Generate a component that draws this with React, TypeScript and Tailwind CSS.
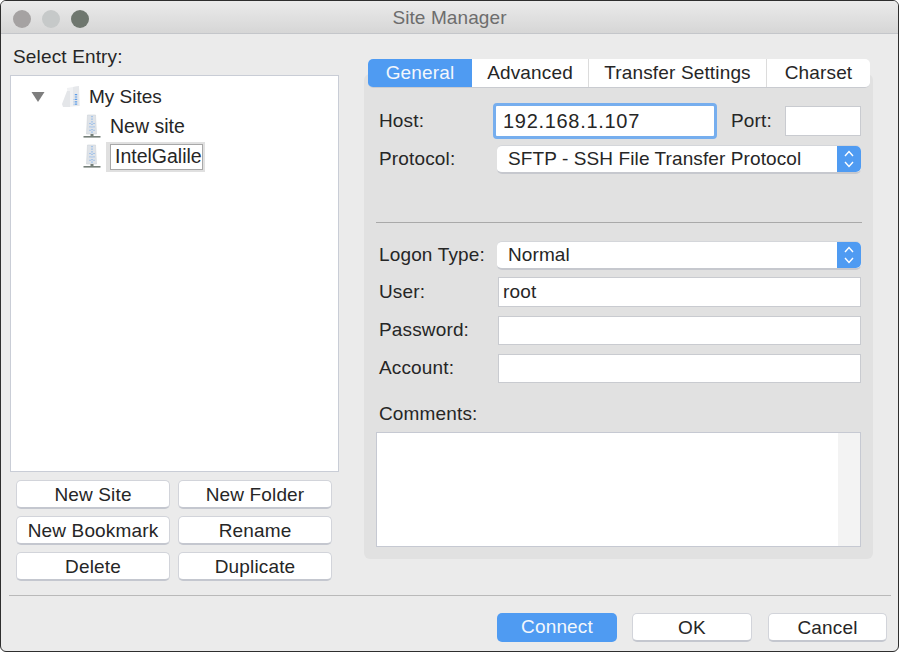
import React from "react";

const TXT = "text-[19px] tracking-[0.15px] text-[#262626]";
const BTN =
  "flex items-center justify-center pt-[1px] bg-white rounded-[5px] border border-[#d2d4da] border-b-[2px] border-b-[#c4c7cf] text-[19px] tracking-[0.15px] text-[#262626] leading-none";

// little server tower used in the tree
function ServerIcon() {
  return (
    <svg width="18" height="26" viewBox="0 0 18 26" className="shrink-0">
      <path d="M4.5 1 L12.5 1 L13.5 20 L3.5 20 Z" fill="#dfe3e8" stroke="#cfd3d8" strokeWidth="0.6" />
      <path d="M9 2 L9 20" stroke="#8fb8ea" strokeWidth="1.4" strokeDasharray="1.2 1.4" />
      <path d="M7 9 L7 19 M11 9 L11 19" stroke="#6fa6ea" strokeWidth="1" strokeDasharray="1 2.4" />
      <rect x="7.5" y="20" width="3" height="2" fill="#76807a" />
      <rect x="0.5" y="22" width="17" height="1.6" fill="#76807a" />
    </svg>
  );
}

// the My Sites folder stack
function SitesIcon() {
  return (
    <svg width="20" height="24" viewBox="0 0 20 24" className="shrink-0">
      <path d="M6 3 L18 1 L18.5 21 L8 22 Z" fill="#f0f1f3" />
      <path d="M1 19 L6 6 L9 6 L9 22 L2 22 Z" fill="#e4e6e9" />
      <path d="M12 2 L18 1 L18.5 21 L12 21 Z" fill="#e6e8eb" />
      <path d="M15 9 L15 20" stroke="#5c9ce8" strokeWidth="2.4" strokeDasharray="1.2 1.2" />
      <path d="M13 14 L13 20" stroke="#9cc2ef" strokeWidth="1" strokeDasharray="1 1.4" />
    </svg>
  );
}

function Stepper() {
  return (
    <div className="w-[24px] self-stretch shrink-0 flex items-center justify-center bg-[#4f9bf2] rounded-r-[5px]">
      <svg width="12" height="20" viewBox="0 0 12 20" fill="none" stroke="#ffffff" strokeWidth="1.4">
        <path d="M2 7 L6 2.5 L10 7" />
        <path d="M2 13 L6 17.5 L10 13" />
      </svg>
    </div>
  );
}

function Select({ value }: { value: string }) {
  return (
    <div className="flex items-center w-[364px] bg-white rounded-[5px] border-b-[2px] border-b-[#c6c8ce] border-t border-t-[#d4d6da] h-[29px]">
      <span className="flex-1 pl-[11px] text-[19px] tracking-[0.1px] text-[#262626]">{value}</span>
      <Stepper />
    </div>
  );
}

function Field({ label, top }: { label: string; top: string }) {
  return (
    <div className={`flex items-center ${top}`}>
      <span className={`w-[119px] shrink-0 ${TXT}`}>{label}</span>
      <div className="w-[363px] h-[29px] bg-white border border-[#c9cbd0]"></div>
    </div>
  );
}

export default function App() {
  return (
    <div className="w-[900px] h-[653px] bg-white pr-[1px] pb-[1px] overflow-hidden" style={{ fontFamily: '"Liberation Sans", Arial, sans-serif' }}>
      <div className="h-full rounded-[6px] border border-[#2e2e2e] bg-[#ebebeb] flex flex-col overflow-hidden">
        {/* TITLE BAR */}
        <div className="h-[33px] shrink-0 pt-[3px] grid grid-cols-[1fr_auto_1fr] items-center bg-gradient-to-b from-[#ebebeb] to-[#d6d6d6] border-b border-[#c4c6ca]">
          <div className="flex items-center gap-[11px] pl-[12px]">
            <span className="w-[18px] h-[18px] rounded-full bg-[#a5a2a2]"></span>
            <span className="w-[18px] h-[18px] rounded-full bg-[#c6c9c9]"></span>
            <span className="w-[18px] h-[18px] rounded-full bg-[#6f776f]"></span>
          </div>
          <span className="text-[19px] text-[#6d6d6d] tracking-[0.1px]">Site Manager</span>
          <div></div>
        </div>

        <div className="flex flex-1 pl-[9px]">
          {/* LEFT COLUMN */}
          <div className="w-[331px] shrink-0 flex flex-col">
            <div className={`h-[41px] flex items-center pl-[3px] pt-[5px] ${TXT}`}>Select Entry:</div>
            <div className="h-[397px] w-[329px] bg-white border border-[#c9cdd6] pt-[8px]">
              <div className="flex items-center h-[26px] pl-[20px]">
                <svg width="14" height="12" viewBox="0 0 14 12" className="shrink-0">
                  <path d="M0.5 1 L13.5 1 L7 11 Z" fill="#7e7e7e" />
                </svg>
                <div className="ml-[16px]"><SitesIcon /></div>
                <span className="ml-[8px] text-[19px] text-[#262626]">My Sites</span>
              </div>
              <div className="flex items-center h-[30px] pl-[72px] mt-[2px]">
                <ServerIcon />
                <span className="ml-[9px] text-[19.5px] text-[#262626]">New site</span>
              </div>
              <div className="flex items-center h-[30px] pl-[72px]">
                <ServerIcon />
                <span className="ml-[5px] h-[30px] w-[99px] bg-[#e0e0e0] p-[2px] pl-[4px]">
                  <span className="flex items-center h-full bg-white border border-[#a8a8a8] pl-[4px] text-[19.5px] text-[#262626] overflow-hidden">IntelGalile</span>
                </span>
              </div>
            </div>
            <div className="grid grid-cols-[154px_154px] gap-x-[8px] gap-y-[7px] pl-[6px] pt-[8px]">
              <div className={`${BTN} h-[29px]`}>New Site</div>
              <div className={`${BTN} h-[29px]`}>New Folder</div>
              <div className={`${BTN} h-[29px]`}>New Bookmark</div>
              <div className={`${BTN} h-[29px]`}>Rename</div>
              <div className={`${BTN} h-[29px]`}>Delete</div>
              <div className={`${BTN} h-[29px]`}>Duplicate</div>
            </div>
          </div>

          {/* RIGHT COLUMN: tab panel */}
          <div className="ml-[23px] w-[510px] shrink-0 pt-[40px]">
            <div className="bg-[#e1e1e1] rounded-[6px] h-[485px] w-[509px] flex flex-col pl-[15px]">
              <div className="-mt-[15px] -ml-[11px] w-[502px] h-[29px] shrink-0 flex bg-white rounded-[5px] border-b border-[#c9cbd0] text-[19px] tracking-[0.15px] text-[#262626] overflow-hidden">
                <div className="w-[104px] flex items-center justify-center bg-[#4f9bf2] text-[#f3f7fc]">General</div>
                <div className="w-[117px] flex items-center justify-center border-r border-[#dcdcdc]">Advanced</div>
                <div className="w-[178px] flex items-center justify-center border-r border-[#dcdcdc]">Transfer Settings</div>
                <div className="flex-1 flex items-center justify-center">Charset</div>
              </div>

              <div className="flex items-center mt-[15px] h-[36px]">
                <span className={`w-[114px] shrink-0 ${TXT}`}>Host:</span>
                <div className="w-[224px] h-[36px] bg-white border-[3px] border-[#76aeee] rounded-[4px] flex items-center pl-[7px] text-[20px] tracking-[0.7px] text-[#262626]">192.168.1.107</div>
                <span className={`ml-[14px] w-[54px] shrink-0 ${TXT}`}>Port:</span>
                <div className="w-[76px] h-[30px] bg-white border border-[#c9cbd0]"></div>
              </div>
              <div className="flex items-center mt-[6px]">
                <span className={`w-[118px] shrink-0 ${TXT}`}>Protocol:</span>
                <Select value="SFTP - SSH File Transfer Protocol" />
              </div>

              <div className="h-[1px] bg-[#a9a9a9] mt-[48px] -ml-[3px] w-[486px]"></div>

              <div className="flex items-center mt-[18px]">
                <span className={`w-[118px] shrink-0 ${TXT}`}>Logon Type:</span>
                <Select value="Normal" />
              </div>
              <div className="flex items-center mt-[7px]">
                <span className={`w-[119px] shrink-0 ${TXT}`}>User:</span>
                <div className={`w-[363px] h-[30px] bg-white border border-[#c9cbd0] flex items-center pl-[4px] ${TXT}`}>root</div>
              </div>
              <Field label="Password:" top="mt-[9px]" />
              <Field label="Account:" top="mt-[9px]" />
              <div className={`mt-[21px] leading-[20px] ${TXT}`}>Comments:</div>
              <div className="mt-[8px] -ml-[3px] w-[485px] h-[115px] bg-white border border-[#c6c9d2] flex justify-end">
                <div className="w-[22px] bg-[#f3f3f3]"></div>
              </div>
            </div>
          </div>
        </div>

        {/* BOTTOM */}
        <div className="h-[1px] bg-[#b9b9b9] ml-[8px] mr-[7px] shrink-0"></div>
        <div className="h-[55px] shrink-0 flex justify-end items-start pt-[17px] pr-[11px] gap-[15px]">
          <div className="w-[120px] h-[29px] flex items-center justify-center bg-[#4f9bf2] rounded-[5px] text-[19px] tracking-[0.15px] text-[#f3f7fc]">Connect</div>
          <div className={`${BTN} w-[120px] h-[29px]`}>OK</div>
          <div className={`${BTN} ml-[1px] w-[119px] h-[29px]`}>Cancel</div>
        </div>
      </div>
    </div>
  );
}
